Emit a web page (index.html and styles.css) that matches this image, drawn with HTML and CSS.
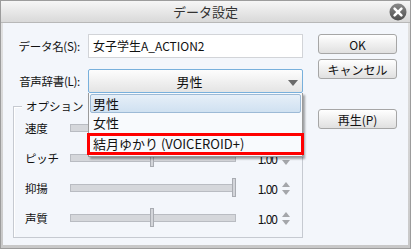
FILE: index.html
```html
<!DOCTYPE html>
<html lang="ja">

<head>
    <meta charset="UTF-8">
    <title>データ設定</title>
    <link rel="stylesheet" href="styles.css">
</head>

<body>
    <div class="window">
        <div class="titlebar">
            <span class="title">データ設定</span>
            <span class="close">
                <svg width="18" height="18" viewBox="0 0 18 18">
                    <defs>
                        <linearGradient id="cg" x1="0" y1="0" x2="0" y2="1">
                            <stop offset="0" stop-color="#8a8a8a"/>
                            <stop offset="1" stop-color="#4e4e4e"/>
                        </linearGradient>
                    </defs>
                    <circle cx="9" cy="9" r="8.5" fill="url(#cg)"/>
                    <path d="M5.6 5.6 L12.4 12.4 M12.4 5.6 L5.6 12.4" stroke="#fff" stroke-width="2.6" stroke-linecap="round"/>
                </svg>
            </span>
        </div>

        <div class="content">
            <div class="main">
                <div class="field">
                    <label class="field-label">データ名(S):</label>
                    <div class="textbox">女子学生A_ACTION2</div>
                </div>
                <div class="field">
                    <label class="field-label">音声辞書(L):</label>
                    <div class="combo">
                        <span class="combo-value">男性</span>
                        <span class="combo-arrow"></span>
                        <ul class="combo-list">
                            <li class="item selected">男性</li>
                            <li class="item">女性</li>
                            <li class="item marked">結月ゆかり (VOICEROID+)</li>
                        </ul>
                    </div>
                </div>

                <div class="group">
                    <div class="group-title">オプション</div>
                    <div class="param">
                        <span class="param-label">速度</span>
                        <div class="track"><span class="thumb" style="left: 50%"></span></div>
                        <span class="param-value">1.00</span>
                        <span class="spin"><i class="up"></i><i class="down"></i></span>
                    </div>
                    <div class="param">
                        <span class="param-label">ピッチ</span>
                        <div class="track"><span class="thumb" style="left: 50%"></span></div>
                        <span class="param-value">1.00</span>
                        <span class="spin"><i class="up"></i><i class="down"></i></span>
                    </div>
                    <div class="param">
                        <span class="param-label">抑揚</span>
                        <div class="track"><span class="thumb" style="left: 100%"></span></div>
                        <span class="param-value">1.00</span>
                        <span class="spin"><i class="up"></i><i class="down"></i></span>
                    </div>
                    <div class="param">
                        <span class="param-label">声質</span>
                        <div class="track"><span class="thumb" style="left: 50%"></span></div>
                        <span class="param-value">1.00</span>
                        <span class="spin"><i class="up"></i><i class="down"></i></span>
                    </div>
                </div>
            </div>

            <div class="buttons">
                <button class="btn">OK</button>
                <button class="btn">キャンセル</button>
                <button class="btn play">再生(P)</button>
            </div>
        </div>
    </div>
</body>

</html>
```

FILE: styles.css
```css
* {
    box-sizing: border-box;
}

body {
    margin: 0;
    font-family: "Noto Sans CJK JP", "Noto Sans", sans-serif;
    font-size: 12px;
    color: #111;
    background: #fff;
}

.window {
    width: 411px;
    height: 249px;
    border: 1px solid #9c9c9c;
    padding: 0 2px 3px;
    background: linear-gradient(#e4e4e4, #c8c8c8);
    display: flex;
    flex-direction: column;
}

.titlebar {
    height: 22px;
    margin: 0 -2px;
    padding: 0 2px;
    background: linear-gradient(#f6f6f6, #d9d9d9);
    border-bottom: 1px solid #b8b8b8;
    display: flex;
    align-items: center;
    justify-content: center;
    position: relative;
}

.title {
    font-size: 13px;
    color: #333;
    line-height: 1;
}

.close {
    position: absolute;
    right: 3px;
    top: 2px;
    width: 18px;
    height: 18px;
}

.content {
    flex: 1;
    background: #f3f6fb;
    display: flex;
    padding: 11px 11px 0 10px;
    gap: 15px;
}

.main {
    width: 290px;
}

.field {
    display: flex;
    align-items: center;
    gap: 8px;
    height: 24px;
    margin-bottom: 11px;
}

.field-label {
    width: 67px;
    text-align: right;
    white-space: nowrap;
    font-size: 11.5px;
    letter-spacing: -0.3px;
}

.textbox {
    width: 215px;
    height: 24px;
    background: #fff;
    border: 1px solid #d2d4d8;
    padding-left: 4px;
    line-height: 22px;
    white-space: nowrap;
}

.combo {
    position: relative;
    width: 215px;
    height: 24px;
    border: 1px solid #78b0dc;
    border-radius: 2px;
    background: linear-gradient(#fdfdfd, #e4e4e4);
    display: flex;
    align-items: center;
    justify-content: center;
    padding-right: 12px;
}

.combo-value {
    font-size: 13px;
}

.combo-arrow {
    position: absolute;
    right: 4px;
    top: 10px;
    border-left: 5px solid transparent;
    border-right: 5px solid transparent;
    border-top: 6px solid #6a6a6a;
}

.combo-list {
    position: absolute;
    left: -1px;
    top: 23px;
    width: 215px;
    height: 64px;
    margin: 0;
    padding: 1px 0 0;
    list-style: none;
    background: #f8fafd;
    border: 1px solid #9a9a9a;
    border-top: none;
    box-shadow: 2px 2px 2px rgba(0, 0, 0, 0.35);
    z-index: 2;
}

.item {
    height: 20px;
    line-height: 20px;
    padding-left: 4px;
    font-size: 13px;
    white-space: nowrap;
}

.item.selected {
    height: 19px;
    line-height: 17px;
    margin: 0 1px;
    padding-left: 2px;
    border: 1px solid #9dbad6;
    border-radius: 2px;
    background: linear-gradient(#e6eff8, #d0e1f1);
}

.item.marked {
    height: 22px;
    line-height: 16px;
    margin: 0 -2px;
    padding-left: 3px;
    border: 3px solid #f00;
}

.group {
    margin-top: 13px;
    height: 132px;
    border: 1px solid #c6cad1;
    box-shadow: inset 1px 1px 0 #fff;
    padding: 0 0 4px 11px;
}

.group-title {
    width: fit-content;
    height: 14px;
    line-height: 14px;
    margin: -8px 0 0 -3px;
    padding: 0 4px;
    background: #f3f6fb;
    font-size: 11.5px;
}

.param {
    display: flex;
    align-items: center;
    height: 30px;
}

.param-label {
    width: 45px;
    font-size: 11.5px;
    letter-spacing: -0.3px;
}

.track {
    position: relative;
    width: 166px;
    height: 8px;
    background: #d5d7db;
    border: 1px solid #b9bcc2;
}

.thumb {
    position: absolute;
    top: -7px;
    width: 4px;
    height: 19px;
    margin-left: -3px;
    background: #d3d5da;
    border: 1px solid #a9acb2;
}

.param-value {
    width: 41px;
    text-align: right;
    font-size: 12px;
    letter-spacing: -1px;
}

.spin {
    display: flex;
    flex-direction: column;
    gap: 3px;
    margin-left: 5px;
}

.spin i {
    display: block;
    border-left: 4.5px solid transparent;
    border-right: 4.5px solid transparent;
}

.spin .up {
    border-bottom: 5px solid #a4a6aa;
}

.spin .down {
    border-top: 5px solid #a4a6aa;
}

.buttons {
    display: flex;
    flex-direction: column;
    gap: 5px;
}

.btn {
    width: 79px;
    height: 20px;
    padding: 0;
    font-family: inherit;
    font-size: 12px;
    color: #111;
    border: 1px solid #a6a6a6;
    border-radius: 3px;
    background: linear-gradient(#ffffff, #e0e0e0);
}

.btn.play {
    margin-top: 25px;
}
```
